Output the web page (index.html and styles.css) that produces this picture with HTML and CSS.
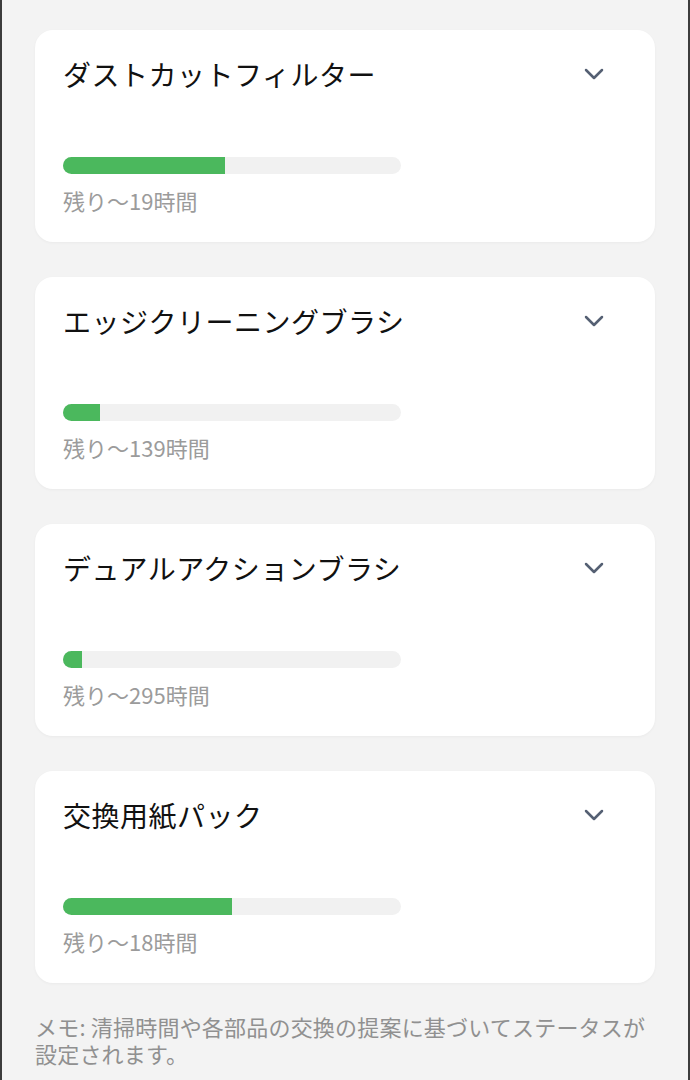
FILE: index.html
```html
<!DOCTYPE html>
<html lang="ja">
<head>
  <meta charset="UTF-8">
  <title>消耗品</title>
  <link rel="stylesheet" href="styles.css">
</head>
<body>
  <div class="screen">
    <div class="parts">

      <div class="part-card">
        <div class="part-head">
          <h2 class="part-name">ダストカットフィルター</h2>
          <svg class="chevron" width="20" height="12" viewBox="0 0 20 12"><path d="M2 2 L10 10 L18 2" fill="none" stroke="#556073" stroke-width="2.5" stroke-linecap="round" stroke-linejoin="round"/></svg>
        </div>
        <div class="bar"><div class="bar-fill" style="width: 48%"></div></div>
        <p class="remaining">残り〜19時間</p>
      </div>

      <div class="part-card">
        <div class="part-head">
          <h2 class="part-name">エッジクリーニングブラシ</h2>
          <svg class="chevron" width="20" height="12" viewBox="0 0 20 12"><path d="M2 2 L10 10 L18 2" fill="none" stroke="#556073" stroke-width="2.5" stroke-linecap="round" stroke-linejoin="round"/></svg>
        </div>
        <div class="bar"><div class="bar-fill" style="width: 11%"></div></div>
        <p class="remaining">残り〜139時間</p>
      </div>

      <div class="part-card">
        <div class="part-head">
          <h2 class="part-name">デュアルアクションブラシ</h2>
          <svg class="chevron" width="20" height="12" viewBox="0 0 20 12"><path d="M2 2 L10 10 L18 2" fill="none" stroke="#556073" stroke-width="2.5" stroke-linecap="round" stroke-linejoin="round"/></svg>
        </div>
        <div class="bar"><div class="bar-fill" style="width: 5.6%"></div></div>
        <p class="remaining">残り〜295時間</p>
      </div>

      <div class="part-card">
        <div class="part-head">
          <h2 class="part-name">交換用紙パック</h2>
          <svg class="chevron" width="20" height="12" viewBox="0 0 20 12"><path d="M2 2 L10 10 L18 2" fill="none" stroke="#556073" stroke-width="2.5" stroke-linecap="round" stroke-linejoin="round"/></svg>
        </div>
        <div class="bar"><div class="bar-fill" style="width: 50%"></div></div>
        <p class="remaining">残り〜18時間</p>
      </div>

    </div>

    <p class="memo">メモ: 清掃時間や各部品の交換の提案に基づいてステータスが設定されます。</p>
  </div>
</body>
</html>
```

FILE: styles.css
```css
html, body {
  margin: 0;
  padding: 0;
  background: #f3f3f3;
}

body {
  font-family: "Noto Sans CJK JP", "Noto Sans", sans-serif;
}

.screen {
  box-sizing: border-box;
  width: 690px;
  min-height: 1080px;
  padding: 30px 33px 0;
  border-left: 2px solid #3c3c3c;
  border-right: 2px solid #3c3c3c;
  background: #f3f3f3;
}

.parts {
  display: flex;
  flex-direction: column;
  gap: 35px;
}

.part-card {
  box-sizing: border-box;
  height: 212px;
  padding: 24px 28px 0;
  background: #fff;
  border-radius: 18px;
  box-shadow: 0 1px 3px rgba(0, 0, 0, 0.04);
}

.part-head {
  display: flex;
  align-items: center;
  justify-content: space-between;
  height: 40px;
}

.part-name {
  margin: 0;
  font-size: 28px;
  font-weight: 400;
  line-height: 40px;
  letter-spacing: 0.5px;
  color: #111;
}

.chevron {
  margin-right: 23px;
}

.bar {
  width: 60%;
  height: 17px;
  margin-top: 63px;
  background: #f1f1f1;
  border-radius: 9px;
  overflow: hidden;
}

.bar-fill {
  height: 100%;
  background: #4bb85d;
}

.remaining {
  margin: 11px 0 0;
  font-size: 22px;
  line-height: 30px;
  color: #9b9b9b;
}

.memo {
  margin: 30px 0 0;
  font-size: 22px;
  line-height: 27px;
  letter-spacing: 0.2px;
  color: #909090;
}
```
